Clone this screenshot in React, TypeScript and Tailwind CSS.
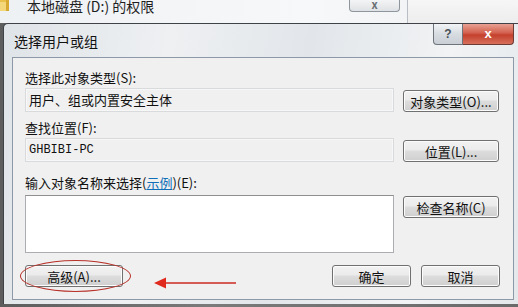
import React from "react";

const cjk = "font-['Noto_Sans_CJK_SC','Noto_Sans',sans-serif]";

function WinButton({ label, className = "" }: { label: React.ReactNode; className?: string }) {
    return (
        <button
            className={`flex h-[22px] items-center justify-center rounded-[3px] border border-[#707070] bg-[linear-gradient(#f2f2f2_0%,#ebebeb_45%,#dddddd_50%,#cfcfcf_100%)] text-[13px] leading-none text-[#111] shadow-[inset_0_0_0_1px_#fcfcfc] ${className}`}
        >
            {label}
        </button>
    );
}

function FolderIcon() {
    return (
        <svg width="9" height="11" viewBox="0 0 9 11">
            <path d="M0 0h9v11H0z" fill="#e8c04a" />
            <path d="M0 2h9v9H0z" fill="#f3d77a" />
            <path d="M6 0h3v11H6z" fill="#d8a932" />
        </svg>
    );
}

export default function App() {
    return (
        <div className={`relative h-[307px] w-[518px] overflow-hidden bg-[linear-gradient(90deg,#5d5d5d,#7a7a7a_40%,#6a6a6a)] ${cjk}`}>
            {/* background window */}
            <div className="flex h-[23px] bg-[linear-gradient(90deg,#eef1f4,#f7f8f9_60%,#eceff2)]">
                <div className="flex w-[408px] items-start border-r border-[#b8bec4]">
                    <FolderIcon />
                    <span className="ml-[18px] mt-[-2px] text-[14px] leading-[17px] text-[#1e1e1e]">本地磁盘 (D:) 的权限</span>
                    <div className="ml-auto mr-[7px] flex h-[12px] w-[51px] items-end justify-center rounded-b-[4px] border border-t-0 border-[#8e959c] bg-[linear-gradient(#f3f4f5,#dfe2e5)] text-[11px] leading-[11px] text-[#6a6f74]">
                        <span className="mb-[1px] font-bold">x</span>
                    </div>
                </div>
                <div className="flex-1 bg-[linear-gradient(#f6f6f6,#ededed)]" />
            </div>

            {/* dialog */}
            <div className="ml-[3px] flex h-[281px] flex-col rounded-tl-[5px] border-l border-t border-[#3f4347] bg-[linear-gradient(100deg,#dfe4e8,#eef0f2_30%,#e2e6ea_55%,#f1f3f4_80%,#e4e8eb)] pb-[4px] pl-[8px] pr-[4px]">
                <div className="flex h-[33px] items-start">
                    <span className="ml-[2px] mt-[9px] text-[14px] leading-[16px] text-[#111]">选择用户或组</span>
                    <div className="ml-auto flex h-[21px]">
                        <div className="flex w-[30px] items-center justify-center rounded-bl-[4px] border border-t-0 border-[#6d747b] bg-[linear-gradient(#f2f4f6,#d7dce1_50%,#c9cfd5)] text-[12px] font-bold text-[#4a5056] [font-family:'Liberation_Sans',sans-serif]">
                            ?
                        </div>
                        <div className="flex w-[51px] items-center justify-center rounded-br-[4px] border border-l-0 border-t-0 border-[#6d3a34] bg-[linear-gradient(#e8a193,#d3604e_45%,#c4402c_55%,#d6705c)] text-[13px] font-bold text-white [font-family:'Liberation_Sans',sans-serif]">
                            x
                        </div>
                    </div>
                </div>

                {/* client area */}
                <div className="flex flex-1 flex-col border border-[#8d99a6] bg-[#f0f0f0] pl-[12px] pr-[13px] pt-[12px] text-[13px] text-[#111]">
                    <div className="h-[15px] leading-[15px]">选择此对象类型(S):</div>
                    <div className="mt-[3px] flex items-start">
                        <div className="flex h-[24px] w-[369px] items-center border border-[#d8dadc] bg-[#f0f0f0] pl-[3px] shadow-[inset_0_0_0_1px_#f7f7f7]">
                            用户、组或内置安全主体
                        </div>
                        <WinButton className="ml-[9px] mt-[2px] w-[96px]" label="对象类型(O)..." />
                    </div>

                    <div className="mt-[8px] h-[15px] leading-[15px]">查找位置(F):</div>
                    <div className="mt-[3px] flex items-start">
                        <div className="flex h-[24px] w-[369px] items-center border border-[#d8dadc] bg-[#f0f0f0] pl-[3px] text-[12px] shadow-[inset_0_0_0_1px_#f7f7f7] [font-family:'Liberation_Mono',monospace]">
                            GHBIBI-PC
                        </div>
                        <WinButton className="ml-[9px] mt-[2px] w-[96px]" label="位置(L)..." />
                    </div>

                    <div className="mt-[13px] h-[15px] leading-[15px]">
                        输入对象名称来选择(<span className="text-[#0f6fb8] underline">示例</span>)(E):
                    </div>
                    <div className="mt-[5px] flex items-start">
                        <div className="h-[58px] w-[369px] border border-[#abadb3] border-t-[#8e8f8f] bg-white" />
                        <WinButton className="ml-[9px] mt-[1px] w-[96px]" label="检查名称(C)" />
                    </div>

                    <div className="mt-[12px] flex items-start">
                        <WinButton className="w-[98px]" label="高级(A)..." />
                        <WinButton className="ml-auto w-[79px]" label="确定" />
                        <WinButton className="ml-[10px] w-[79px]" label="取消" />
                    </div>
                </div>
            </div>

            {/* annotation overlay */}
            <div className="absolute left-[20px] top-[260px] h-[32px] w-[111px] rounded-[50%] border-[1.5px] border-[#b8322a]" />
            <svg className="absolute left-[152px] top-[276px]" width="86" height="14" viewBox="0 0 86 14">
                <path d="M12 7H84" stroke="#cc2a22" strokeWidth="1.5" />
                <path d="M2 7L14 1.5V12.5Z" fill="#e02a1e" />
            </svg>
        </div>
    );
}
